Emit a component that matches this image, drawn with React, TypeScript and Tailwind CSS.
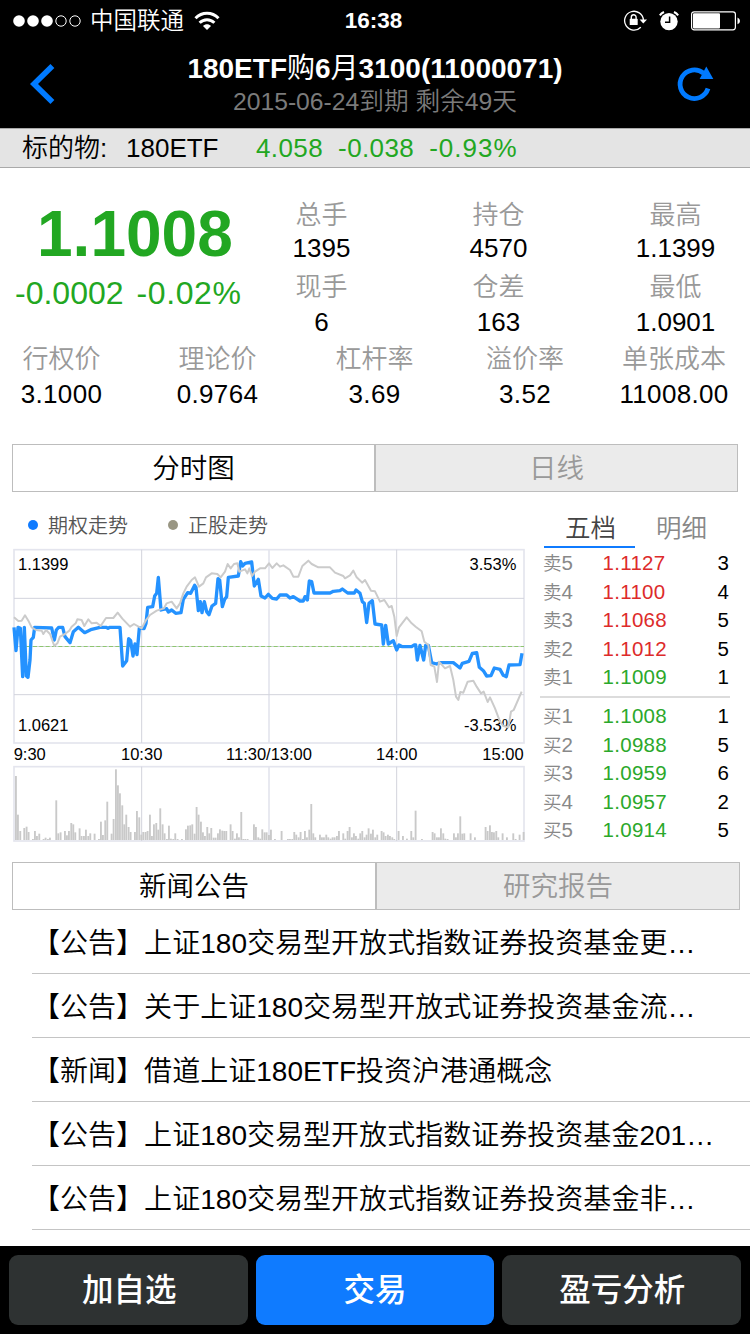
import clsx from "clsx";

const quotes = [
  { label: "总手", value: "1395" },
  { label: "持仓", value: "4570" },
  { label: "最高", value: "1.1399" },
  { label: "现手", value: "6" },
  { label: "仓差", value: "163" },
  { label: "最低", value: "1.0901" },
];

const details = [
  { label: "行权价", value: "3.1000" },
  { label: "理论价", value: "0.9764" },
  { label: "杠杆率", value: "3.69" },
  { label: "溢价率", value: "3.52" },
  { label: "单张成本", value: "11008.00" },
];

const asks = [
  { label: "卖5", price: "1.1127", volume: 3, up: true },
  { label: "卖4", price: "1.1100", volume: 4, up: true },
  { label: "卖3", price: "1.1068", volume: 5, up: true },
  { label: "卖2", price: "1.1012", volume: 5, up: true },
  { label: "卖1", price: "1.1009", volume: 1, up: false },
];

const bids = [
  { label: "买1", price: "1.1008", volume: 1, up: false },
  { label: "买2", price: "1.0988", volume: 5, up: false },
  { label: "买3", price: "1.0959", volume: 6, up: false },
  { label: "买4", price: "1.0957", volume: 2, up: false },
  { label: "买5", price: "1.0914", volume: 5, up: false },
];

const news = [
  "【公告】上证180交易型开放式指数证券投资基金更…",
  "【公告】关于上证180交易型开放式证券投资基金流…",
  "【新闻】借道上证180ETF投资沪港通概念",
  "【公告】上证180交易型开放式指数证券投资基金201…",
  "【公告】上证180交易型开放式指数证券投资基金非…",
];

const optionLine =
  "42,592 48,662 54,592 61,595 68,740 73,592 79,738 84,742 90,690 93,630 100,622 104,592 155,594 163,630 169,600 176,592 188,592 195,620 210,638 220,605 235,592 254,608 275,598 300,592 318,592 324,595 330,592 360,592 368,708 380,692 386,626 392,632 399,678 405,642 411,674 418,594 432,596 438,580 443,532 458,530 464,498 470,490 475,442 483,540 500,536 505,546 515,540 527,550 543,548 550,508 563,488 572,490 584,466 588,472 595,542 601,515 606,548 613,515 620,545 627,554 636,528 647,520 654,446 659,450 667,530 674,508 680,500 685,442 715,438 722,395 728,408 735,400 755,396 763,468 775,448 783,498 795,504 805,493 817,505 830,507 840,495 860,495 870,504 880,500 900,513 910,513 915,500 922,510 928,453 935,455 942,489 990,489 1000,484 1020,482 1027,477 1043,489 1063,489 1068,480 1080,490 1087,515 1093,520 1100,578 1107,520 1117,512 1125,582 1145,585 1150,642 1157,586 1165,642 1180,632 1190,660 1197,645 1207,650 1235,650 1242,645 1247,645 1252,690 1260,646 1271,690 1277,646 1285,646 1295,698 1310,702 1320,698 1360,698 1380,714 1387,700 1407,694 1417,670 1430,668 1438,712 1450,722 1460,738 1473,737 1483,714 1500,718 1510,736 1519,740 1527,705 1560,704 1566,670";

const stockLine =
  "42,562 55,573 65,572 75,556 85,572 95,592 108,600 125,602 130,612 138,600 150,612 163,648 172,640 180,620 195,612 208,602 215,590 227,580 232,568 245,570 253,588 265,568 275,580 290,578 302,588 318,564 340,564 353,548 367,566 390,590 402,582 425,595 437,572 450,555 470,542 492,535 500,520 515,515 530,535 540,520 550,490 560,470 575,450 585,442 597,470 610,460 618,442 635,430 652,432 662,442 675,425 683,402 692,415 702,402 712,400 718,425 735,418 742,430 748,415 756,438 765,425 780,415 795,415 807,400 817,414 830,400 840,410 850,406 870,420 880,440 895,440 907,408 925,392 935,402 955,412 990,412 1005,428 1030,438 1035,445 1050,436 1060,422 1070,442 1087,458 1095,450 1113,482 1125,484 1140,515 1153,510 1167,532 1175,528 1183,560 1190,618 1197,592 1220,562 1235,580 1247,590 1265,604 1273,635 1285,645 1292,705 1303,710 1311,756 1317,695 1335,715 1350,708 1360,750 1368,800 1375,810 1381,786 1390,788 1403,755 1420,752 1430,770 1443,790 1451,785 1463,816 1470,802 1485,835 1500,875 1510,888 1525,892 1533,845 1541,840 1565,785";

// [x, height] per minute
const volumes = [
  [48, 192], [54, 76], [61, 27], [73, 36], [80, 40], [86, 24], [99, 3], [105, 27], [111, 12], [118, 19],
  [131, 3], [137, 7], [144, 3], [150, 7], [169, 119], [175, 20], [182, 23], [195, 27], [201, 14], [207, 27],
  [214, 51], [220, 47], [226, 23], [239, 35], [245, 12], [252, 12], [258, 31], [265, 12], [271, 20], [284, 19],
  [297, 3], [303, 55], [309, 15], [316, 59], [322, 115], [335, 19], [341, 63], [348, 212], [354, 164], [360, 140],
  [367, 104], [373, 47], [379, 76], [386, 39], [392, 24], [405, 24], [411, 87], [418, 68], [424, 16], [430, 24],
  [437, 24], [443, 27], [450, 76], [456, 12], [462, 47], [469, 51], [475, 31], [481, 95], [488, 47], [494, 20],
  [501, 3], [507, 43], [513, 4], [520, 3], [526, 20], [533, 3], [546, 3], [558, 32], [564, 43], [571, 44],
  [577, 47], [584, 19], [590, 99], [596, 76], [603, 55], [609, 23], [615, 12], [622, 39], [628, 20], [634, 36],
  [641, 7], [647, 7], [654, 20], [660, 32], [667, 28], [673, 27], [679, 27], [692, 47], [698, 27], [705, 4],
  [711, 20], [717, 8], [724, 84], [730, 3], [736, 3], [743, 3], [762, 47], [768, 39], [775, 8], [781, 4],
  [787, 32], [794, 23], [800, 23], [807, 15], [813, 31], [825, 3], [845, 27], [864, 3], [870, 3], [877, 3],
  [883, 24], [889, 16], [896, 8], [902, 24], [909, 3], [915, 27], [921, 8], [928, 31], [934, 108], [940, 20],
  [946, 8], [960, 16], [966, 8], [972, 8], [979, 16], [985, 8], [992, 4], [998, 8], [1004, 8], [1011, 12],
  [1017, 27], [1030, 20], [1036, 4], [1043, 27], [1049, 39], [1056, 8], [1062, 20], [1068, 12], [1075, 4], [1081, 20],
  [1087, 27], [1094, 8], [1100, 16], [1106, 35], [1113, 19], [1119, 31], [1126, 8], [1132, 16], [1145, 27], [1151, 23],
  [1157, 12], [1164, 16], [1170, 12], [1177, 8], [1183, 3], [1196, 27], [1209, 12], [1221, 4], [1234, 27], [1240, 8],
  [1247, 88], [1266, 3], [1298, 24], [1304, 20], [1311, 8], [1317, 8], [1323, 35], [1330, 20], [1336, 4], [1343, 3],
  [1362, 20], [1368, 8], [1374, 20], [1381, 71], [1387, 19], [1393, 20], [1412, 20], [1425, 8], [1457, 39], [1463, 27],
  [1470, 44], [1476, 24], [1482, 23], [1489, 27], [1495, 8], [1508, 20], [1521, 8], [1540, 20], [1547, 3], [1559, 16],
  [1571, 24],
];

function StatusBar() {
  return (
    <div className="grid h-[41px] grid-cols-[1fr_auto_1fr] items-center pl-[13px] pr-[10px] text-white">
      <div className="flex items-center">
        <svg width="70" height="14" viewBox="0 0 70 14">
          <circle cx="6" cy="7" r="5.8" fill="#fff" />
          <circle cx="20" cy="7" r="5.8" fill="#fff" />
          <circle cx="34" cy="7" r="5.8" fill="#fff" />
          <circle cx="48" cy="7" r="5.2" fill="none" stroke="#fff" />
          <circle cx="62" cy="7" r="5.2" fill="none" stroke="#fff" />
        </svg>
        <span className="ml-[7px] pt-0.5 text-[23.5px] font-[350] leading-none">中国联通</span>
        <svg className="ml-2.5" width="26" height="20" viewBox="0 0 26 20" fill="none" stroke="#fff" strokeWidth="3">
          <path d="M1.5 7.2C8 .6 18 .6 24.5 7.2" />
          <path d="M5.6 11.7C9.8 7.6 16.2 7.6 20.4 11.7" />
          <path d="M13 19 9 15C11.2 12.8 14.8 12.8 17 15Z" fill="#fff" stroke="none" />
        </svg>
      </div>
      <span className="pr-1.5 pt-px text-[22.5px] font-bold leading-none">16:38</span>
      <div className="flex items-center justify-end">
        <svg width="24" height="22" viewBox="0 0 24 22" fill="none" stroke="#fff">
          <path d="M17.8 17.2A9.4 9.4 0 1 1 20.4 10" strokeWidth="1.3" />
          <path d="M16.6 9.4H24L20.3 13.4Z" fill="#fff" stroke="none" />
          <rect x="6.7" y="8.8" width="8" height="6.2" rx="0.6" fill="#fff" stroke="none" />
          <path d="M8.3 9.4V7.2a2.4 2.4 0 0 1 4.8 0V9.4" strokeWidth="1.4" />
        </svg>
        <svg className="ml-3" width="20" height="20" viewBox="0 0 20 20">
          <circle cx="10" cy="10.6" r="8.7" fill="#fff" />
          <path d="M.8 4.4A10 10 0 0 1 5 1M15 1A10 10 0 0 1 19.2 4.4" stroke="#fff" strokeWidth="2.2" fill="none" />
          <path d="M10.6 5.5V11.3H6" stroke="#000" strokeWidth="1.5" fill="none" />
        </svg>
        <svg className="ml-3" width="49" height="20" viewBox="0 0 49 20">
          <rect x="0.6" y="0.8" width="43.8" height="18" rx="2.5" fill="none" stroke="#fff" strokeWidth="1.2" />
          <rect x="2" y="2.2" width="27" height="15.2" rx="1" fill="#fff" />
          <path d="M46.5 6.5Q49 7.5 49 10T46.5 13.3Z" fill="#fff" />
        </svg>
      </div>
    </div>
  );
}

function Header() {
  return (
    <header className="h-32 bg-black">
      <StatusBar />
      <div className="grid h-[87px] grid-cols-[1fr_auto_1fr] items-start pl-[30px] pr-[30px]">
        <svg className="mt-[22px]" width="26" height="42" viewBox="0 0 26 42" fill="none" stroke="#007aff" strokeWidth="5.6" strokeLinejoin="miter">
          <path d="M22.4 3 4 21 22.4 39" />
        </svg>
        <div className="flex flex-col items-center pt-[10px] text-center">
          <h1 className="whitespace-nowrap text-[28px] font-bold leading-[36px] text-white">
            180ETF<span className="font-normal">购</span>6<span className="font-normal">月</span>3100(11000071)
          </h1>
          <p className="whitespace-nowrap text-[24.7px] font-[350] leading-[29px] text-[#7b7b7b]">
            2015-06-24到期 剩余49天
          </p>
        </div>
        <svg className="mr-1.5 mt-6 justify-self-end" width="38" height="38" viewBox="0 0 38 38">
          <path d="M32 23.6A14.3 14.3 0 1 1 27.5 8.2" fill="none" stroke="#007aff" strokeWidth="4.8" />
          <path d="M30.3 1.6 37.3 14H23.6Z" fill="#007aff" />
        </svg>
      </div>
    </header>
  );
}

function Underlying() {
  return (
    <div className="flex h-10 items-center border-y border-[#a9a9a9] bg-[#e4e4e4] pl-[22px] text-[26px] font-[350] leading-none">
      <span className="w-[104px]">标的物:</span>
      <span className="w-[130px]">180ETF</span>
      <div className="flex gap-[15px] tracking-[0.4px] text-[#22a722]">
        <span>4.058</span>
        <span>-0.038</span>
        <span className="tracking-[1px]">-0.93%</span>
      </div>
    </div>
  );
}

function Stat({ label, value, className }: { label: string; value: string; className?: string }) {
  return (
    <div className="flex h-[72px] flex-col items-center pt-px text-[26px] font-[350] leading-[36px]">
      <span className="text-[#999]">{label}</span>
      <span className={className}>{value}</span>
    </div>
  );
}

function Quote() {
  return (
    <section className="h-[276px] pt-[28px]">
      <div className="flex h-[144px]">
        <div className="flex w-[247px] flex-col text-[#22a722]">
          <div className="pl-[37px] text-[64px] font-bold leading-[76px]">1.1008</div>
          <div className="flex gap-[13px] pl-[15px] text-[32px] leading-[43px]">
            <span>-0.0002</span>
            <span className="tracking-[0.6px]">-0.02%</span>
          </div>
        </div>
        <div className="grid grid-cols-[149px_149px_149px] gap-x-[28px]">
          {quotes.map((item, i) => (
            <Stat key={item.label} {...item} className={i < 3 ? "-mt-[3px]" : "-mt-px"} />
          ))}
        </div>
      </div>
      <div className="grid grid-cols-[123px_189px_125px_176px_122px]">
        {details.map((item) => (
          <Stat key={item.label} {...item} className="-mt-px tracking-[0.3px]" />
        ))}
      </div>
    </section>
  );
}

function Tabs({ tabs, className }: { tabs: string[]; className?: string }) {
  return (
    <div className={clsx("ml-3 flex h-12 border border-[#bdbdbd] text-[27.5px] font-[350] leading-none", className)}>
      {tabs.map((tab, i) => (
        <button
          key={tab}
          className={clsx(
            "flex items-center justify-center pt-0.5",
            i > 0 ? "flex-1 border-l-2 border-[#bdbdbd] bg-[#ebebeb] text-[#999]" : "w-[calc(50%-1px)]"
          )}
        >
          {tab}
        </button>
      ))}
    </div>
  );
}

function Chart() {
  return (
    <svg className="block" width="514" height="296" viewBox="36 351 1542 888">
      <g fill="none" stroke="#e4e5ee" strokeWidth="5">
        <rect x="42" y="359" width="1530" height="580" />
        <rect x="42" y="1010" width="1530" height="223" />
        <path d="M807 359V939M807 1010V1233" />
      </g>
      <g fill="none" stroke="#d2d3dc" strokeWidth="3">
        <path d="M42 505H1572M42 794H1572" />
        <path d="M425 359V939M1190 359V939M425 1010V1233M1190 1010V1233" />
      </g>
      <path d="M42 649.5H1572" stroke="#cdd3d8" strokeWidth="3" />
      <path d="M42 649.5H1572" stroke="#8ec66f" strokeWidth="3" strokeDasharray="12 7" />

      <g fill="#c9c9c9">
        {volumes.map(([x, h]) => (
          <rect key={x} x={x - 3} y={1230 - h} width="5.6" height={h} />
        ))}
      </g>

      <polyline points={optionLine} fill="none" stroke="#2492ff" strokeWidth="10" strokeLinejoin="round" />
      <g fontSize="49.5" fill="#000">
        <text x="54" y="421">1.1399</text>
        <text x="54" y="904">1.0621</text>
        <text x="1549" y="421" textAnchor="end">3.53%</text>
        <text x="1549" y="904" textAnchor="end">-3.53%</text>
        <text x="41" y="989">9:30</text>
        <text x="425" y="989" textAnchor="middle">10:30</text>
        <text x="807" y="989" textAnchor="middle">11:30/13:00</text>
        <text x="1190" y="989" textAnchor="middle">14:00</text>
        <text x="1571" y="989" textAnchor="end">15:00</text>
      </g>
      <polyline points={stockLine} fill="none" stroke="#cbcbcb" strokeWidth="6" strokeLinejoin="round" />
    </svg>
  );
}

function Legend() {
  return (
    <div className="flex h-[55px] items-center pl-4 pt-[11px] text-xl font-[350] leading-none text-[#555]">
      <span className="size-2.5 rounded-full bg-[#0f7bff]" />
      <span className="ml-[10px] w-[120px] pt-0.5">期权走势</span>
      <span className="size-2.5 rounded-full bg-[#999683]" />
      <span className="ml-[10px] pt-0.5">正股走势</span>
    </div>
  );
}

function Levels({ rows }: { rows: typeof asks }) {
  return (
    <div>
      {rows.map((row) => (
        <div key={row.label} className="flex h-[28.6px] items-center pl-[3px] pr-px text-[20.5px] font-[350] leading-none">
          <span className="w-[59.5px] text-[#888]"><span className="text-[18.5px]">{row.label[0]}</span>{row.label[1]}</span>
          <span className={clsx("flex-1 tracking-[0.3px]", row.up ? "text-[#dd2b2b]" : "text-[#2ba82b]")}>{row.price}</span>
          <span>{row.volume}</span>
        </div>
      ))}
    </div>
  );
}

function OrderBook() {
  return (
    <div className="ml-[14px] w-[190px] pt-[15px]">
      <div className="flex pl-1 text-[25.5px] font-[350] leading-none">
        <span className="flex h-[41px] w-[91px] items-center justify-center border-b-2 border-[#0f7bff] pl-[2px] pt-[5px] text-[#444]">五档</span>
        <span className="flex h-[41px] w-[93px] items-center justify-center pt-[3px] text-[#888]">明细</span>
      </div>
      <div className="pt-px">
        <Levels rows={asks} />
      </div>
      <div className="mb-[4px] mt-[4px] h-0.5 bg-[#dcdcdc]" />
      <Levels rows={bids} />
    </div>
  );
}

function BottomBar() {
  return (
    <footer className="grid h-[88px] grid-cols-3 gap-2 bg-black p-[9px] text-[31.5px] font-medium leading-none text-white">
      <button className="rounded-[9px] bg-[#2e3232] pl-0.5 pt-0.5">加自选</button>
      <button className="rounded-[9px] bg-[#0f7bff] pt-0.5">交易</button>
      <button className="rounded-[9px] bg-[#2e3232] pl-px pt-0.5">盈亏分析</button>
    </footer>
  );
}

export default function App() {
  return (
    <div className="flex h-[1334px] w-[750px] flex-col overflow-hidden bg-white font-['Liberation_Sans','Noto_Sans_CJK_SC',sans-serif] text-black">
      <Header />
      <Underlying />
      <Quote />
      <Tabs tabs={["分时图", "日线"]} className="w-[726px]" />
      <div className="flex h-[370px] pl-3">
        <div>
          <Legend />
          <Chart />
        </div>
        <OrderBook />
      </div>
      <Tabs tabs={["新闻公告", "研究报告"]} className="w-[728px]" />
      <ul className="flex-1 pl-8">
        {news.map((title) => (
          <li key={title} className="flex h-16 items-center whitespace-nowrap border-b border-[#c4c4c4] pt-1 text-[28px] font-[350] tracking-[0.03px]">
            {title}
          </li>
        ))}
      </ul>
      <BottomBar />
    </div>
  );
}
